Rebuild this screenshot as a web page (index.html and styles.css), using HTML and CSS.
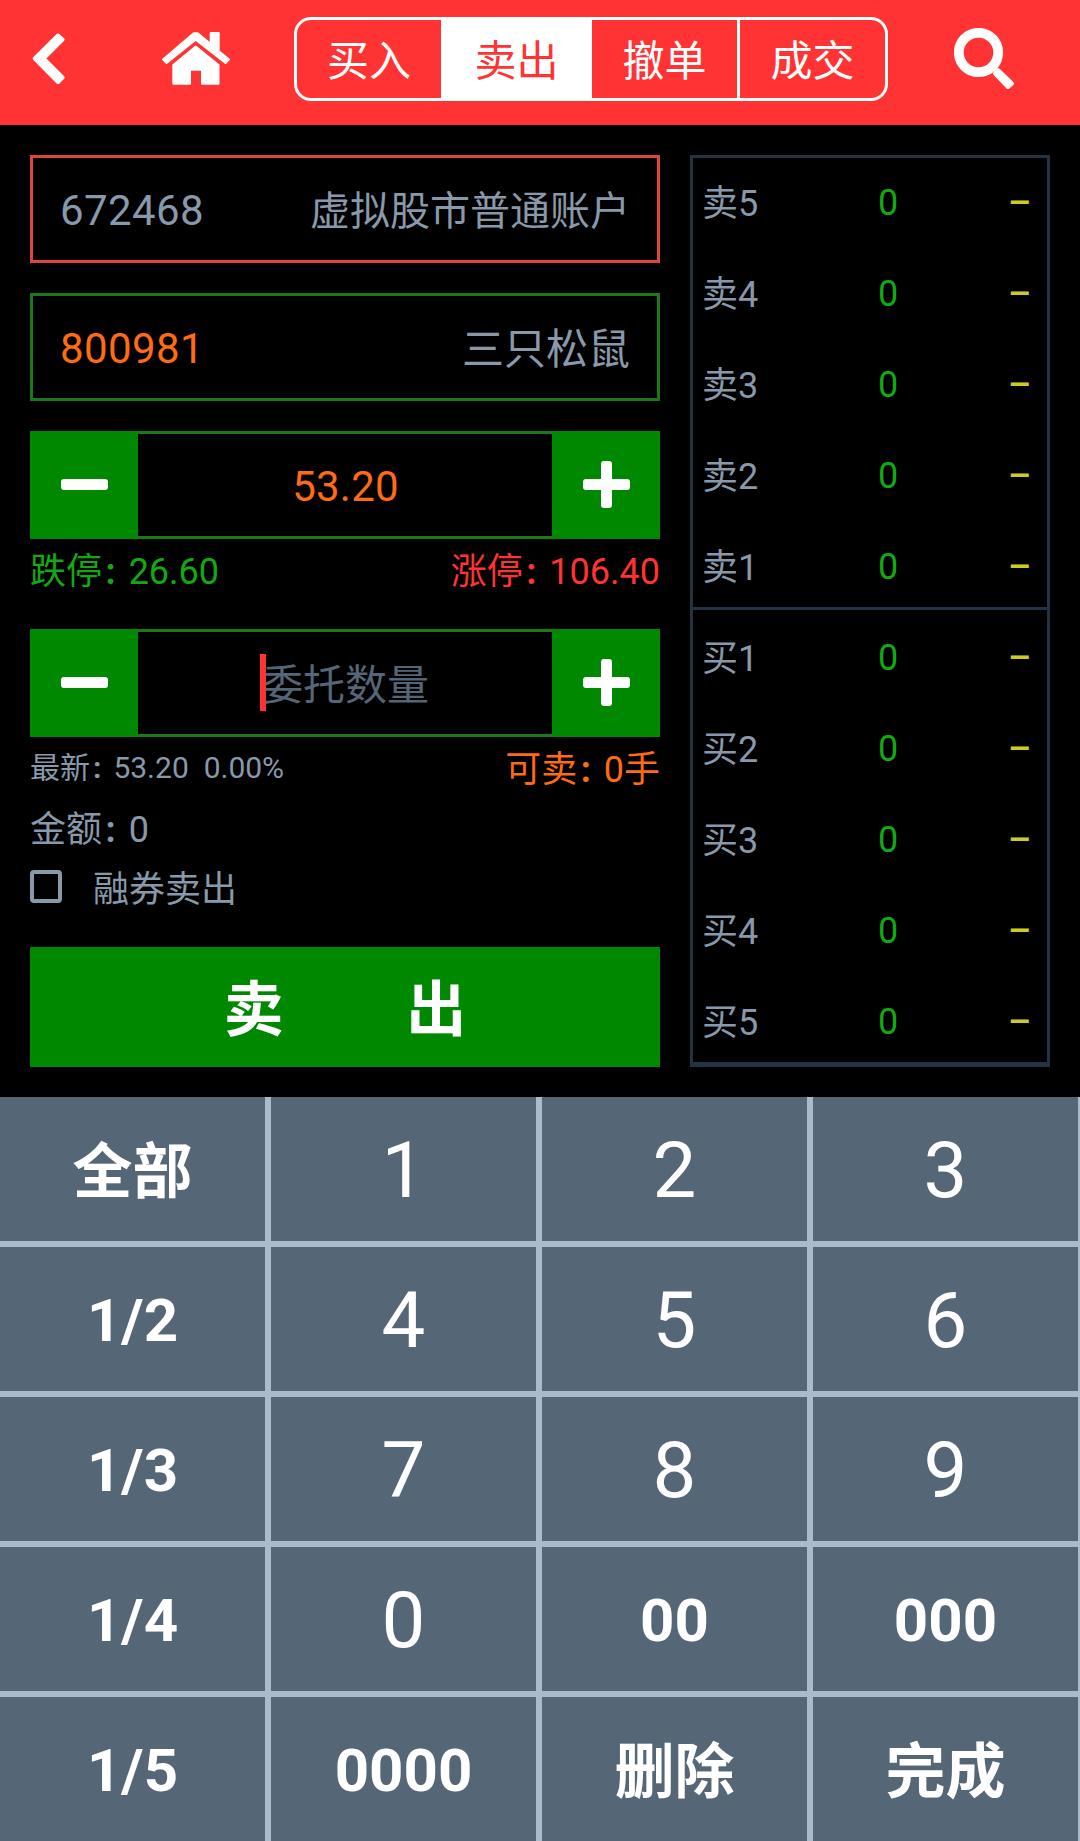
FILE: index.html
```html
<!DOCTYPE html>
<html lang="zh-CN">
<head>
  <meta charset="UTF-8" />
  <meta name="viewport" content="width=device-width, initial-scale=1.0" />
  <title>卖出</title>
  <link rel="stylesheet" href="styles.css">
</head>
<body>
  <header class="header">
    <a class="back" aria-label="返回">
      <svg width="34" height="54" viewBox="0 0 34 54" fill="#fff" stroke="#fff" stroke-width="4" stroke-linejoin="round"><path d="M26 3.500 L30.500 7.500 L11.500 26.500 L30.500 45.500 L26 50 L2.800 26.500 Z"/></svg>
    </a>
    <a class="home" aria-label="首页">
      <svg width="68" height="54" viewBox="0 0 68 54" fill="#fff" stroke="#fff" stroke-width="2" stroke-linejoin="round">
        <path d="M31.700 1.300 H35.700 L48.700 12 V1 H56.700 V19 L67 27.500 L63.500 31 L33.700 7.700 L4.500 31 L1 27.500 Z"/>
        <path d="M33.700 14.500 L56.500 33 V51.700 H40 V37.700 H28 V51.700 H11.300 V33 Z"/>
      </svg>
    </a>
    <nav class="tabs">
      <a class="tab">买入</a>
      <a class="tab active">卖出</a>
      <a class="tab">撤单</a>
      <a class="tab">成交</a>
    </nav>
    <a class="search" aria-label="搜索">
      <svg width="62" height="62" viewBox="0 0 62 62" fill="#fff" stroke="#fff"><circle cx="24.500" cy="24.500" r="19.700" fill="none" stroke-width="9.800"/><path d="M44 42 L58 55.500 L54 59 L41 45.500 Z" stroke-width="4" stroke-linejoin="round"/></svg>
    </a>
  </header>

  <main class="trade">
    <section class="order">
      <div class="field account">
        <span class="num">672468</span>
        <span class="name">虚拟股市普通账户</span>
      </div>
      <div class="field stock">
        <span class="num code">800981</span>
        <span class="name">三只松鼠</span>
      </div>

      <div class="stepper">
        <button class="step"><i class="bar"></i></button>
        <div class="value price">53.20</div>
        <button class="step"><i class="bar plus"></i></button>
      </div>
      <div class="hint limits">
        <span class="down">跌停<b class="colon">:</b>26.60</span>
        <span class="up">涨停<b class="colon">:</b>106.40</span>
      </div>

      <div class="stepper">
        <button class="step"><i class="bar"></i></button>
        <div class="value amount-input"><span class="placeholder">委托数量</span></div>
        <button class="step"><i class="bar plus"></i></button>
      </div>
      <div class="hint">
        <span class="last">最新<b class="colon">:</b>53.20&nbsp; 0.00%</span>
        <span class="avail">可卖<b class="colon">:</b>0手</span>
      </div>
      <div class="amount">金额<b class="colon">:</b>0</div>
      <label class="margin"><i class="box"></i>融券卖出</label>
      <button class="submit">卖&emsp;&emsp;出</button>
    </section>

    <section class="quotes">
      <div class="side sell">
        <div class="row"><span>卖5</span><em>0</em><s>–</s></div>
        <div class="row"><span>卖4</span><em>0</em><s>–</s></div>
        <div class="row"><span>卖3</span><em>0</em><s>–</s></div>
        <div class="row"><span>卖2</span><em>0</em><s>–</s></div>
        <div class="row"><span>卖1</span><em>0</em><s>–</s></div>
      </div>
      <div class="side buy">
        <div class="row"><span>买1</span><em>0</em><s>–</s></div>
        <div class="row"><span>买2</span><em>0</em><s>–</s></div>
        <div class="row"><span>买3</span><em>0</em><s>–</s></div>
        <div class="row"><span>买4</span><em>0</em><s>–</s></div>
        <div class="row"><span>买5</span><em>0</em><s>–</s></div>
      </div>
    </section>
  </main>

  <div class="keypad">
    <button class="key word">全部</button>
    <button class="key digit">1</button>
    <button class="key digit">2</button>
    <button class="key digit">3</button>
    <button class="key">1/2</button>
    <button class="key digit">4</button>
    <button class="key digit">5</button>
    <button class="key digit">6</button>
    <button class="key">1/3</button>
    <button class="key digit">7</button>
    <button class="key digit">8</button>
    <button class="key digit">9</button>
    <button class="key">1/4</button>
    <button class="key digit">0</button>
    <button class="key">00</button>
    <button class="key">000</button>
    <button class="key">1/5</button>
    <button class="key">0000</button>
    <button class="key word">删除</button>
    <button class="key word">完成</button>
  </div>
</body>
</html>
```
FILE: styles.css
```css
* {
  box-sizing: border-box;
}

body {
  margin: 0;
  width: 1080px;
  height: 1841px;
  overflow: hidden;
  background-color: #000;
  color: #8899aa;
  font-family: Roboto, "Noto Sans CJK SC", sans-serif;
  font-size: 36px;
}

button {
  border: none;
  padding: 0;
  font-family: inherit;
  color: #fff;
}

svg {
  display: block;
}

.header {
  display: flex;
  align-items: flex-start;
  height: 125px;
  background-color: #ff3333;
}

.back {
  margin: 32px 0 0 32px;
}

.home {
  margin: 32px 0 0 96px;
}

.tabs {
  display: flex;
  width: 594px;
  height: 84px;
  margin: 17px 0 0 64px;
  border: 3px solid #fff;
  border-radius: 17px;
  overflow: hidden;
}

.tab {
  width: 148px;
  line-height: 83px;
  text-align: center;
  font-size: 42px;
  color: #fff;
}

.tab:first-child {
  width: 144px;
}

.tab + .tab {
  border-left: 3px solid #fff;
}

.tab.active {
  background-color: #fff;
  color: #ff3333;
}

.search {
  margin: 28px 0 0 66px;
}

.trade {
  display: flex;
  gap: 30px;
  height: 972px;
  padding: 30px;
}

.order {
  width: 630px;
}

.field {
  display: flex;
  align-items: center;
  justify-content: space-between;
  height: 108px;
  margin-bottom: 30px;
  padding: 2px 27px 0;
  border: 3px solid #1a7a1a;
  font-size: 42px;
}

.account {
  border-color: #dd4444;
  font-size: 40px;
}

.name {
  padding-bottom: 5px;
}

.num {
  font-size: 42px;
  letter-spacing: 0.4px;
}

.code,
.price,
.avail {
  color: #ff6b12;
}

.stepper {
  display: flex;
  height: 108px;
}

.step {
  display: flex;
  align-items: center;
  justify-content: center;
  width: 108px;
  background-color: #008800;
}

.bar {
  position: relative;
  width: 47px;
  height: 11px;
  margin-bottom: 1px;
  border-radius: 3px;
  background-color: #fff;
}

.plus::after {
  content: "";
  position: absolute;
  left: 18px;
  top: -18px;
  width: 11px;
  height: 47px;
  border-radius: 3px;
  background-color: #fff;
}

.value {
  flex: 1;
  display: flex;
  align-items: center;
  justify-content: center;
  border: solid #1a7a1a;
  border-width: 3px 0;
  padding-top: 2px;
  font-size: 42px;
}

.price {
  padding-left: 1px;
  letter-spacing: 0.2px;
}

.amount-input {
  padding: 0 0 3px;
}

.placeholder {
  position: relative;
  color: #556677;
}

/* text cursor */
.placeholder::before {
  content: "";
  position: absolute;
  left: -1px;
  top: 50%;
  width: 6px;
  height: 57px;
  margin-top: -28px;
  background-color: #ff3333;
}

.hint {
  display: flex;
  align-items: center;
  justify-content: space-between;
  height: 62px;
  padding-bottom: 5px;
}

.limits {
  margin-bottom: 28px;
}

.down {
  color: #11aa11;
}

.up {
  color: #ff3333;
}

.last {
  padding-bottom: 1px;
  font-size: 30px;
}

.last .colon {
  width: 0.78em;
}

.colon {
  display: inline-block;
  width: 0.74em;
  padding-left: 0.1em;
  font-weight: bold;
}

.amount {
  height: 60px;
  line-height: 62px;
}

.margin {
  display: flex;
  align-items: center;
  height: 60px;
  padding-bottom: 6px;
}

.box {
  width: 32px;
  height: 33px;
  margin-right: 31px;
  border: 4px solid #8899aa;
  border-radius: 4px;
}

.submit {
  display: block;
  width: 630px;
  height: 120px;
  margin-top: 28px;
  padding-bottom: 6px;
  background-color: #008800;
  font-size: 60px;
  font-weight: bold;
}

.quotes {
  width: 360px;
  border: 3px solid #223344;
  border-bottom-width: 5px;
}

.side {
  height: 452px;
}

.sell {
  border-bottom: 3px solid #223344;
}

.buy {
  padding-top: 3px;
}

.row {
  display: grid;
  grid-template-columns: 166px 40px 1fr;
  align-items: center;
  height: 91px;
  padding: 0 16px 2px 9px;
}

.row span {
  padding-bottom: 5px;
}

.row em {
  font-style: normal;
  text-align: center;
  color: #11aa11;
}

.row s {
  padding-top: 1px;
  text-decoration: none;
  text-align: right;
  font-weight: 500;
  color: #cccc22;
}

.keypad {
  display: grid;
  grid-template-columns: repeat(4, 265px);
  grid-auto-rows: 144px;
  gap: 6px;
  height: 744px;
  background-color: #aabbcc;
}

.key {
  padding-top: 3px;
  background-color: #556677;
  font-size: 60px;
  font-weight: bold;
}

.word {
  padding: 0 0 6px;
}

.digit {
  font-size: 78px;
  font-weight: normal;
}
```
